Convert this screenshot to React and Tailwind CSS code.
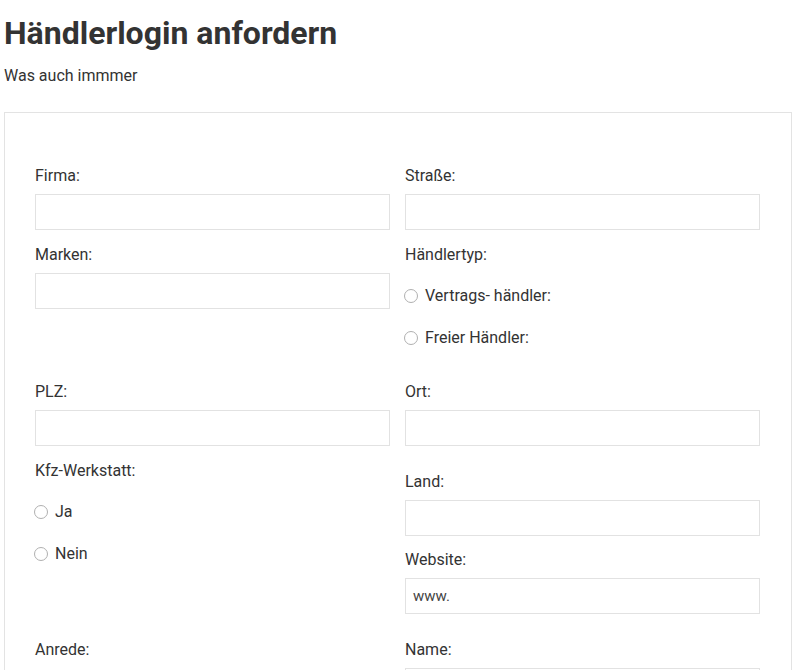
import React from 'react';

const Label = ({ children, className = '' }) => (
  <div className={`pt-[1px] text-[16px] leading-[20px] text-[#333] ${className}`}>{children}</div>
);

const Field = ({ label, value, className = '' }) => (
  <div className={className}>
    <Label>{label}</Label>
    <div className="mt-[8px] h-[36px] border border-[#e2e2e2] bg-white flex items-center px-[7px] text-[15px] text-[#444]">
      {value}
    </div>
  </div>
);

const Radio = ({ label, first }) => (
  <div className={`${first ? 'mt-[21px]' : 'mt-[22px]'} flex items-center h-[20px] text-[16px] text-[#333]`}>
    <span className="-ml-[1px] w-[14px] h-[14px] rounded-full border border-[#b0b0b0] bg-white shrink-0" />
    <span className="ml-[7px]">{label}</span>
  </div>
);

const App = () => {
  return (
    <div className="min-h-screen bg-white pl-[4px] pr-[8px] font-['Roboto',sans-serif] text-[#333]">
      <h1 className="pt-[14px] text-[32px] leading-[38px] font-bold text-[#333]">Händlerlogin anfordern</h1>
      <p className="mt-[14px] text-[16px] leading-[20px]">Was auch immmer</p>

      {/* FORM BOX */}
      <div className="mt-[26px] border border-[#e3e3e3] pl-[30px] pr-[31px] pt-[52px] pb-[40px]">
        <div className="grid grid-cols-2 gap-x-[15px]">
          <Field label="Firma:" />
          <Field label="Straße:" />
        </div>

        <div className="grid grid-cols-2 gap-x-[15px] mt-[14px] items-start">
          <Field label="Marken:" />
          <div>
            <Label>Händlertyp:</Label>
            <Radio first label="Vertrags- händler:" />
            <Radio label="Freier Händler:" />
          </div>
        </div>

        <div className="grid grid-cols-2 gap-x-[15px] mt-[33px]">
          <Field label="PLZ:" />
          <Field label="Ort:" />
        </div>

        <div className="grid grid-cols-2 gap-x-[15px] mt-[14px] items-start">
          <div>
            <Label>Kfz-Werkstatt:</Label>
            <Radio first label="Ja" />
            <Radio label="Nein" />
          </div>
          <div className="mt-[11px]">
            <Field label="Land:" />
            <Field label="Website:" value="www." className="mt-[13px]" />
          </div>
        </div>

        <div className="grid grid-cols-2 gap-x-[15px] mt-[25px] items-start">
          <Label>Anrede:</Label>
          <Field label="Name:" />
        </div>
      </div>
    </div>
  );
};

export default App;
